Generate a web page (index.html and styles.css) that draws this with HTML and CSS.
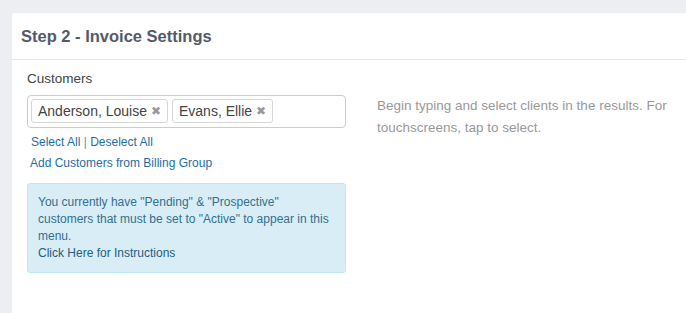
FILE: index.html
```html
<!DOCTYPE html>
<html lang="en">
<head>
  <meta charset="UTF-8" />
  <title>Invoice Settings</title>
  <link rel="stylesheet" href="styles.css">
</head>
<body>
  <div class="panel">
    <div class="panel-heading">
      <h2>Step 2 - Invoice Settings</h2>
    </div>
    <div class="panel-body">
      <div class="col-left">
        <label class="field-label">Customers</label>
        <div class="tag-input">
          <span class="tag">Anderson, Louise <span class="tag-x">&#x2716;</span></span>
          <span class="tag">Evans, Ellie <span class="tag-x">&#x2716;</span></span>
        </div>
        <div class="links">
          <a href="#">Select All</a> <span class="sep">|</span> <a href="#">Deselect All</a>
        </div>
        <div class="links">
          <a href="#">Add Customers from Billing Group</a>
        </div>
        <div class="alert-info">
          You currently have "Pending" &amp; "Prospective" customers that must be set to "Active" to appear in this menu.<br>
          <a href="#">Click Here for Instructions</a>
        </div>
      </div>
      <div class="col-right">
        <p class="help">Begin typing and select clients in the results. For touchscreens, tap to select.</p>
      </div>
    </div>
  </div>
</body>
</html>
```

FILE: styles.css
```css
body {
  margin: 0;
  padding: 13px 0 0 12px;
  background: #eceef1;
  font-family: "Liberation Sans", Arial, sans-serif;
  color: #444;
  height: 300px;
  overflow: hidden;
}

.panel {
  background: white;
  border-radius: 3px 0 0 0;
  min-height: 310px;
}

.panel-heading {
  height: 46px;
  border-bottom: 1px solid #e6e7ea;
  padding: 0 15px 0 9px;
  display: flex;
  align-items: center;
}

.panel-heading h2 {
  margin: 0;
  font-size: 16.5px;
  font-weight: bold;
  color: #545a6a;
}

.panel-body {
  display: flex;
  gap: 31px;
  padding: 10px 0 0 15px;
}

.col-left {
  width: 319px;
}

.col-right {
  flex: 1;
}

.field-label {
  display: block;
  font-size: 13.5px;
  color: #444;
  line-height: 18px;
  margin-bottom: 7px;
}

.tag-input {
  border: 1px solid #ccc;
  border-radius: 4px;
  height: 33px;
  padding: 3px;
  box-sizing: border-box;
  display: flex;
  gap: 4px;
  align-items: flex-start;
}

.tag {
  display: inline-flex;
  align-items: center;
  height: 24px;
  box-sizing: border-box;
  border: 1px solid #d6d6d6;
  border-radius: 3px;
  padding: 0 6px;
  font-size: 14px;
  color: #444;
  background: #fff;
}

.tag-x {
  margin-left: 4px;
  font-size: 12px;
  color: #999;
}

.links {
  font-size: 12px;
  line-height: 14px;
  padding-left: 4px;
  margin-top: 7px;
}

.links + .links {
  padding-left: 3px;
}

a {
  color: #1e6ea3;
  text-decoration: none;
}

.sep {
  color: #888;
}

.alert-info {
  margin-top: 13px;
  background: #d9edf7;
  border: 1px solid #bce8f1;
  border-radius: 3px;
  padding: 10px;
  font-size: 12px;
  line-height: 17px;
  color: #31708f;
}

.alert-info a {
  color: #245d7d;
}

.help {
  margin: 0;
  padding-top: 25px;
  font-size: 13.5px;
  line-height: 22px;
  color: #999;
  width: 300px;
}
```
